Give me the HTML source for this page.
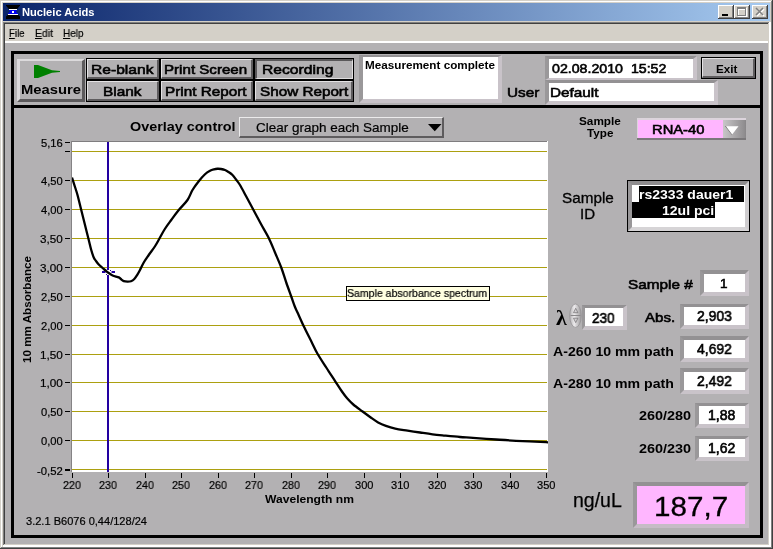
<!DOCTYPE html>
<html lang="en"><head><meta charset="utf-8"><title>Nucleic Acids</title>
<style>
html,body{margin:0;padding:0;background:#d4d0c8;}
#w{position:relative;width:773px;height:549px;overflow:hidden;font-family:"Liberation Sans", sans-serif;}
#w div,#w svg,#w span{position:absolute;box-sizing:content-box;}
#w span{will-change:transform;white-space:pre;line-height:1;transform-origin:0 0;}
#w span u{text-decoration:underline;text-underline-offset:1px;}
</style></head>
<body><div id="w">
<div style="left:0px;top:0px;width:773px;height:549px;background:#d4d0c8;"></div>
<div style="left:1px;top:1px;width:771px;height:547px;background:#fff;"></div>
<div style="left:2px;top:2px;width:770px;height:546px;background:#d4d0c8;"></div>
<div style="left:771px;top:1px;width:1px;height:547px;background:#808080;"></div>
<div style="left:1px;top:547px;width:771px;height:1px;background:#808080;"></div>
<div style="left:772px;top:0px;width:1px;height:549px;background:#404040;"></div>
<div style="left:0px;top:548px;width:773px;height:1px;background:#404040;"></div>
<div style="left:3px;top:3px;width:767px;height:18px;background:linear-gradient(to right,#0a246a,#a6caf0);"></div>
<div style="left:3px;top:22px;width:767px;height:525px;background:#808080;"></div>
<div style="left:4px;top:23px;width:766px;height:524px;background:#404040;"></div>
<div style="left:769px;top:22px;width:2px;height:525px;background:#fff;"></div>
<div style="left:3px;top:545px;width:768px;height:2px;background:#fff;"></div>
<div style="left:768px;top:23px;width:1px;height:522px;background:#d4d0c8;"></div>
<div style="left:4px;top:544px;width:765px;height:1px;background:#d4d0c8;"></div>
<div style="left:5px;top:24px;width:763px;height:17px;background:#d4d0c8;"></div>
<div style="left:5px;top:41px;width:763px;height:2px;background:#fff;"></div>
<div style="left:5px;top:43px;width:763px;height:501px;background:#b3b1b3;"></div>
<svg style="left:6px;top:5px" width="14" height="14" viewBox="0 0 14 14">
<polygon points="0,0 14,0 14,0.6 11.2,4 2.8,4 0,0.6" fill="#000"/>
<rect x="3" y="4" width="8" height="1" fill="#fff"/>
<polygon points="3,5 11,5 10,6.8 12.2,9 1.8,9 4,6.8" fill="#0000f0"/>
<rect x="6" y="6" width="2" height="2" fill="#fff"/>
<rect x="2" y="9" width="10" height="1" fill="#fff"/>
<polygon points="1.6,10 12.4,10 14,11.6 14,14 0,14 0,11.6" fill="#000"/>
</svg>
<div style="left:718px;top:5px;width:16px;height:14px;background:#404040;"></div>
<div style="left:718px;top:5px;width:15px;height:13px;background:#fff;"></div>
<div style="left:719px;top:6px;width:14px;height:12px;background:#808080;"></div>
<div style="left:719px;top:6px;width:13px;height:11px;background:#d4d0c8;"></div>
<div style="left:734px;top:5px;width:16px;height:14px;background:#404040;"></div>
<div style="left:734px;top:5px;width:15px;height:13px;background:#fff;"></div>
<div style="left:735px;top:6px;width:14px;height:12px;background:#808080;"></div>
<div style="left:735px;top:6px;width:13px;height:11px;background:#d4d0c8;"></div>
<div style="left:752px;top:5px;width:16px;height:14px;background:#404040;"></div>
<div style="left:752px;top:5px;width:15px;height:13px;background:#fff;"></div>
<div style="left:753px;top:6px;width:14px;height:12px;background:#808080;"></div>
<div style="left:753px;top:6px;width:13px;height:11px;background:#d4d0c8;"></div>
<div style="left:722px;top:14px;width:6px;height:2px;background:#000;"></div>
<div style="left:738px;top:8px;width:7px;height:6px;border:1px solid #fff;border-top-width:2px"></div>
<div style="left:737px;top:7px;width:7px;height:6px;border:1px solid #808080;border-top-width:2px"></div>
<svg style="left:755px;top:7px" width="11" height="10" viewBox="0 0 11 10">
<path d="M2,2 L9,9 M9,2 L2,9" stroke="#fff" stroke-width="1.6" fill="none"/>
<path d="M1,1 L8,8 M8,1 L1,8" stroke="#808080" stroke-width="1.6" fill="none"/></svg>
<div style="left:11px;top:51px;width:752px;height:487px;background:#000;"></div>
<div style="left:14px;top:54px;width:746px;height:51px;background:#b3b1b3;"></div>
<div style="left:14px;top:108px;width:746px;height:427px;background:#b3b1b3;"></div>
<div style="left:17px;top:59px;width:62px;height:38px;background:#b3b1b3;border-style:solid;border-width:2px 3px 3px 3px;border-color:#dcdadc #5c5a5c #5c5a5c #dcdadc;"></div>
<svg style="left:34px;top:65px" width="27" height="14" viewBox="0 0 27 14"><polygon points="0,0 4,0 12,3 18,5.3 26,6 26,7 18,7.7 12,10 4,13 0,13" fill="#008000"/></svg>
<div style="left:86px;top:58px;width:268px;height:44px;background:#000;"></div>
<div style="left:87px;top:59px;width:69px;height:17px;background:#b3b1b3;border-style:solid;border-width:1px 2px 2px 1px;border-color:#e4e2e4 #5e5c5e #5e5c5e #e4e2e4;"></div>
<div style="left:87px;top:81px;width:69px;height:17px;background:#b3b1b3;border-style:solid;border-width:1px 2px 2px 1px;border-color:#e4e2e4 #5e5c5e #5e5c5e #e4e2e4;"></div>
<div style="left:161px;top:59px;width:89px;height:17px;background:#b3b1b3;border-style:solid;border-width:1px 2px 2px 1px;border-color:#e4e2e4 #5e5c5e #5e5c5e #e4e2e4;"></div>
<div style="left:161px;top:81px;width:89px;height:17px;background:#b3b1b3;border-style:solid;border-width:1px 2px 2px 1px;border-color:#e4e2e4 #5e5c5e #5e5c5e #e4e2e4;"></div>
<div style="left:255px;top:59px;width:95px;height:17px;background:#b3b1b3;border-style:solid;border-width:2px 1px 1px 2px;border-color:#5a585a #e0dee0 #e0dee0 #5a585a;"></div>
<div style="left:255px;top:81px;width:95px;height:17px;background:#b3b1b3;border-style:solid;border-width:1px 2px 2px 1px;border-color:#e4e2e4 #5e5c5e #5e5c5e #e4e2e4;"></div>
<div style="left:359px;top:55px;width:135px;height:42px;background:#fff;border-style:solid;border-width:2px 4px 4px 4px;border-color:#939193 #c9c3c9 #c9c3c9 #9a989a"></div>
<div style="left:545px;top:56px;width:144px;height:19px;background:#fff;border-style:solid;border-width:3px 4px 2px 4px;border-color:#939193 #c9c3c9 #c9c3c9 #9a989a"></div>
<div style="left:545px;top:80px;width:165px;height:18px;background:#fff;border-style:solid;border-width:3px 4px 4px 4px;border-color:#939193 #c9c3c9 #c9c3c9 #9a989a"></div>
<div style="left:701px;top:57px;width:55px;height:22px;background:#000;"></div>
<div style="left:702px;top:58px;width:50px;height:17px;background:#b3b1b3;border-style:solid;border-width:1px 2px 2px 1px;border-color:#e4e2e4 #5e5c5e #5e5c5e #e4e2e4;"></div>
<div style="left:239px;top:117px;width:202px;height:18px;background:#b3b1b3;border-style:solid;border-width:1px 2px 2px 1px;border-color:#ecebec #5e5c5e #5e5c5e #ecebec;"></div>
<svg style="left:428px;top:124px" width="14" height="8" viewBox="0 0 14 8"><polygon points="0,0 13.5,0 6.75,7.2" fill="#000"/></svg>
<div style="left:71px;top:141px;width:476px;height:1px;background:#7f7d7f;"></div>
<div style="left:547px;top:141px;width:1px;height:1px;background:#fff;"></div>
<div style="left:71px;top:141px;width:1px;height:331px;background:#858385;"></div>
<svg style="left:72px;top:142px" width="476" height="330" viewBox="72 142 476 330"><rect x="72" y="142" width="476" height="330" fill="#fff"/><rect x="72" y="151" width="475" height="1" fill="#aca010"/><rect x="72" y="180" width="475" height="1" fill="#aca010"/><rect x="72" y="209" width="475" height="1" fill="#aca010"/><rect x="72" y="238" width="475" height="1" fill="#aca010"/><rect x="72" y="267" width="475" height="1" fill="#aca010"/><rect x="72" y="296" width="475" height="1" fill="#aca010"/><rect x="72" y="325" width="475" height="1" fill="#aca010"/><rect x="72" y="354" width="475" height="1" fill="#aca010"/><rect x="72" y="382" width="475" height="1" fill="#aca010"/><rect x="72" y="411" width="475" height="1" fill="#aca010"/><rect x="72" y="440" width="475" height="1" fill="#aca010"/><rect x="72" y="469" width="475" height="1" fill="#aca010"/><rect x="107" y="142" width="2" height="128" fill="#2200a0"/><rect x="107" y="275" width="2" height="197" fill="#2200a0"/><rect x="102" y="271" width="3.5" height="2" fill="#2200a0"/><rect x="111.5" y="271" width="3.5" height="2" fill="#2200a0"/><rect x="110" y="270" width="1" height="1" fill="#2200a0"/><rect x="106" y="274" width="1" height="1" fill="#2200a0"/><path d="M72.00,177.50 C72.50,179.08 74.08,184.08 75.00,187.00 C75.92,189.92 76.46,191.17 77.50,195.00 C78.54,198.83 80.00,205.00 81.25,210.00 C82.50,215.00 83.75,220.00 85.00,225.00 C86.25,230.00 87.71,235.83 88.75,240.00 C89.79,244.17 90.42,247.08 91.25,250.00 C92.08,252.92 92.96,255.67 93.75,257.50 C94.54,259.33 95.17,259.83 96.00,261.00 C96.83,262.17 97.75,263.42 98.75,264.50 C99.75,265.58 100.96,266.58 102.00,267.50 C103.04,268.42 104.00,269.17 105.00,270.00 C106.00,270.83 106.73,271.58 108.00,272.50 C109.27,273.42 110.80,274.68 112.60,275.50 C114.40,276.32 117.32,276.72 118.80,277.40 C120.28,278.08 120.67,278.97 121.50,279.60 C122.33,280.23 122.80,280.87 123.80,281.20 C124.80,281.53 126.30,281.60 127.50,281.60 C128.70,281.60 129.87,281.63 131.00,281.20 C132.13,280.77 133.23,280.10 134.30,279.00 C135.37,277.90 136.45,276.10 137.40,274.60 C138.35,273.10 138.94,272.02 140.00,270.00 C141.06,267.98 142.29,265.00 143.75,262.50 C145.21,260.00 146.88,257.71 148.75,255.00 C150.62,252.29 153.12,249.17 155.00,246.25 C156.88,243.33 158.33,240.42 160.00,237.50 C161.67,234.58 163.12,231.67 165.00,228.75 C166.88,225.83 168.96,223.12 171.25,220.00 C173.54,216.88 176.04,213.33 178.75,210.00 C181.46,206.67 185.21,203.33 187.50,200.00 C189.79,196.67 190.62,193.12 192.50,190.00 C194.38,186.88 196.67,183.88 198.75,181.25 C200.83,178.62 203.12,176.00 205.00,174.25 C206.88,172.50 208.50,171.57 210.00,170.75 C211.50,169.93 212.75,169.63 214.00,169.30 C215.25,168.97 216.33,168.80 217.50,168.75 C218.67,168.70 219.75,168.79 221.00,169.00 C222.25,169.21 223.75,169.50 225.00,170.00 C226.25,170.50 227.25,171.17 228.50,172.00 C229.75,172.83 231.25,173.75 232.50,175.00 C233.75,176.25 234.75,177.83 236.00,179.50 C237.25,181.17 238.29,182.17 240.00,185.00 C241.71,187.83 243.96,192.25 246.25,196.50 C248.54,200.75 251.25,205.83 253.75,210.50 C256.25,215.17 258.75,219.92 261.25,224.50 C263.75,229.08 266.46,233.33 268.75,238.00 C271.04,242.67 272.92,247.58 275.00,252.50 C277.08,257.42 279.38,262.50 281.25,267.50 C283.12,272.50 284.58,277.67 286.25,282.50 C287.92,287.33 289.79,292.42 291.25,296.50 C292.71,300.58 293.96,304.33 295.00,307.00 C296.04,309.67 296.04,309.29 297.50,312.50 C298.96,315.71 301.46,321.46 303.75,326.25 C306.04,331.04 308.96,336.67 311.25,341.25 C313.54,345.83 315.00,349.38 317.50,353.75 C320.00,358.12 324.17,364.24 326.25,367.50 C328.33,370.76 328.34,370.75 330.00,373.30 C331.66,375.85 334.27,379.85 336.20,382.80 C338.13,385.75 339.78,388.42 341.60,391.00 C343.42,393.58 345.15,396.05 347.10,398.30 C349.05,400.55 350.72,402.30 353.30,404.50 C355.88,406.70 359.75,409.38 362.60,411.50 C365.45,413.62 367.82,415.38 370.40,417.20 C372.98,419.02 375.52,420.95 378.10,422.40 C380.68,423.85 383.05,424.87 385.90,425.90 C388.75,426.93 391.58,427.82 395.20,428.60 C398.82,429.38 403.45,429.95 407.60,430.60 C411.75,431.25 415.95,431.88 420.10,432.50 C424.25,433.12 428.37,433.78 432.50,434.30 C436.63,434.82 440.32,435.15 444.90,435.60 C449.48,436.05 455.32,436.63 460.00,437.00 C464.68,437.37 467.00,437.38 473.00,437.80 C479.00,438.22 488.83,439.00 496.00,439.50 C503.17,440.00 507.67,440.35 516.00,440.80 C524.33,441.25 540.67,441.95 546.00,442.20 C551.33,442.45 547.67,442.28 548.00,442.30" fill="none" stroke="#000" stroke-width="2.3" stroke-linejoin="round"/></svg>
<div style="left:65px;top:142px;width:5px;height:1px;background:#000;"></div>
<div style="left:65px;top:151px;width:5px;height:1px;background:#000;"></div>
<div style="left:65px;top:180px;width:5px;height:1px;background:#000;"></div>
<div style="left:65px;top:209px;width:5px;height:1px;background:#000;"></div>
<div style="left:65px;top:238px;width:5px;height:1px;background:#000;"></div>
<div style="left:65px;top:267px;width:5px;height:1px;background:#000;"></div>
<div style="left:65px;top:296px;width:5px;height:1px;background:#000;"></div>
<div style="left:65px;top:325px;width:5px;height:1px;background:#000;"></div>
<div style="left:65px;top:354px;width:5px;height:1px;background:#000;"></div>
<div style="left:65px;top:382px;width:5px;height:1px;background:#000;"></div>
<div style="left:65px;top:411px;width:5px;height:1px;background:#000;"></div>
<div style="left:65px;top:440px;width:5px;height:1px;background:#000;"></div>
<div style="left:65px;top:469px;width:5px;height:2px;background:#000;"></div>
<div style="left:72px;top:473px;width:1px;height:5px;background:#000;"></div>
<div style="left:108px;top:473px;width:1px;height:5px;background:#000;"></div>
<div style="left:145px;top:473px;width:1px;height:5px;background:#000;"></div>
<div style="left:181px;top:473px;width:1px;height:5px;background:#000;"></div>
<div style="left:218px;top:473px;width:1px;height:5px;background:#000;"></div>
<div style="left:254px;top:473px;width:1px;height:5px;background:#000;"></div>
<div style="left:291px;top:473px;width:1px;height:5px;background:#000;"></div>
<div style="left:327px;top:473px;width:1px;height:5px;background:#000;"></div>
<div style="left:364px;top:473px;width:1px;height:5px;background:#000;"></div>
<div style="left:400px;top:473px;width:1px;height:5px;background:#000;"></div>
<div style="left:437px;top:473px;width:1px;height:5px;background:#000;"></div>
<div style="left:473px;top:473px;width:1px;height:5px;background:#000;"></div>
<div style="left:510px;top:473px;width:1px;height:5px;background:#000;"></div>
<div style="left:546px;top:473px;width:1px;height:5px;background:#000;"></div>
<div style="left:346px;top:286px;width:144px;height:15px;background:#000;"></div>
<div style="left:347px;top:287px;width:142px;height:13px;background:#ffffe1;"></div>
<div style="left:637px;top:118px;width:109px;height:22px;background:linear-gradient(to right,#c4c2c4,#8a888a)"></div>
<div style="left:637px;top:118px;width:109px;height:2px;background:#dcd4dc;"></div>
<div style="left:637px;top:118px;width:1px;height:21px;background:#dcd4dc;"></div>
<div style="left:637px;top:138px;width:109px;height:2px;background:#7a787a;"></div>
<div style="left:638px;top:120px;width:85px;height:18px;background:#ffb6ff;"></div>
<div style="left:723px;top:120px;width:22px;height:18px;background:linear-gradient(to right,#c8c6c8,#8e8c8e)"></div>
<svg style="left:725px;top:126px" width="14" height="9" viewBox="0 0 14 9"><polygon points="0,0 1,0 7.5,8.5 6.5,8.5" fill="#6a686a"/><polygon points="1,0.3 13.5,0.3 7.2,8.5" fill="#fff"/></svg>
<div style="left:627px;top:180px;width:123px;height:52px;background:#000;"></div>
<div style="left:628px;top:181px;width:113px;height:42px;background:#fff;border-style:solid;border-width:4px 4px 4px 4px;border-color:#8e8c8e #cfcdcf #d6d4d6 #999799"></div>
<div style="left:639px;top:186px;width:105px;height:16px;background:#000;"></div>
<div style="left:632px;top:202px;width:83px;height:16px;background:#000;"></div>
<div style="left:700px;top:270px;width:41px;height:18px;background:#fff;border-style:solid;border-width:4px 4px 4px 4px;border-color:#939193 #c9c3c9 #c9c3c9 #9a989a"></div>
<svg style="left:569px;top:303px" width="14" height="26" viewBox="0 0 14 26">
<defs><linearGradient id="sg" x1="0" x2="1" y1="0" y2="0"><stop offset="0" stop-color="#b4b2b4"/><stop offset="0.4" stop-color="#eceaec"/><stop offset="1" stop-color="#9a989a"/></linearGradient></defs>
<ellipse cx="6.5" cy="12.7" rx="5.8" ry="11.7" fill="url(#sg)" stroke="#908e90" stroke-width="0.7"/>
<path d="M1.5,12.5 H11.5" stroke="#8a888a" stroke-width="1"/>
<path d="M6.7,5.3 L8.9,9.7 H4.5 Z" fill="#d2d0d2" stroke="#6e6c6e" stroke-width="0.7"/>
<path d="M6.7,19.6 L8.9,15.2 H4.5 Z" fill="#d2d0d2" stroke="#6e6c6e" stroke-width="0.7"/>
</svg>
<div style="left:582px;top:305px;width:38px;height:18px;background:#fff;border-style:solid;border-width:3px 4px 4px 3px;border-color:#939193 #c9c3c9 #c9c3c9 #9a989a"></div>
<div style="left:680px;top:304px;width:61px;height:18px;background:#fff;border-style:solid;border-width:3px 4px 4px 4px;border-color:#939193 #c9c3c9 #c9c3c9 #9a989a"></div>
<div style="left:680px;top:336px;width:61px;height:18px;background:#fff;border-style:solid;border-width:4px 4px 4px 4px;border-color:#939193 #c9c3c9 #c9c3c9 #9a989a"></div>
<div style="left:680px;top:368px;width:61px;height:18px;background:#fff;border-style:solid;border-width:4px 4px 4px 4px;border-color:#939193 #c9c3c9 #c9c3c9 #9a989a"></div>
<div style="left:695px;top:403px;width:46px;height:18px;background:#fff;border-style:solid;border-width:3px 4px 4px 4px;border-color:#939193 #c9c3c9 #c9c3c9 #9a989a"></div>
<div style="left:695px;top:436px;width:46px;height:18px;background:#fff;border-style:solid;border-width:3px 4px 4px 4px;border-color:#939193 #c9c3c9 #c9c3c9 #9a989a"></div>
<div style="left:633px;top:482px;width:108px;height:38px;background:#ffb6ff;border-style:solid;border-width:4px 4px 4px 4px;border-color:#939193 #c6bcc6 #c6bcc6 #9a989a"></div>
<span style="left:21.90px;top:6.69px;font-size:11px;font-weight:700;color:#fff;transform:scaleX(1.0114);">Nucleic Acids</span>
<span style="left:9.03px;top:27.79px;font-size:11px;-webkit-text-stroke:0.2px #000;transform:scaleX(0.8799);"><u>F</u>ile</span>
<span style="left:34.90px;top:27.79px;font-size:11px;-webkit-text-stroke:0.2px #000;transform:scaleX(0.9533);"><u>E</u>dit</span>
<span style="left:62.99px;top:27.79px;font-size:11px;-webkit-text-stroke:0.2px #000;transform:scaleX(0.9077);"><u>H</u>elp</span>
<span style="left:20.85px;top:82.57px;font-size:13.5px;font-weight:700;transform:scaleX(1.0948);">Measure</span>
<span style="left:91.24px;top:62.58px;font-size:13.5px;-webkit-text-stroke:0.6px #000;transform:scaleX(1.1560);">Re-blank</span>
<span style="left:103.29px;top:84.58px;font-size:13.5px;-webkit-text-stroke:0.6px #000;transform:scaleX(1.1415);">Blank</span>
<span style="left:164.34px;top:62.58px;font-size:13.5px;-webkit-text-stroke:0.6px #000;transform:scaleX(1.1195);">Print Screen</span>
<span style="left:165.30px;top:84.58px;font-size:13.5px;-webkit-text-stroke:0.6px #000;transform:scaleX(1.1312);">Print Report</span>
<span style="left:262.22px;top:62.58px;font-size:13.5px;-webkit-text-stroke:0.6px #000;transform:scaleX(1.1598);">Recording</span>
<span style="left:260.32px;top:84.58px;font-size:13.5px;-webkit-text-stroke:0.6px #000;transform:scaleX(1.1300);">Show Report</span>
<span style="left:364.78px;top:60.49px;font-size:11px;font-weight:700;transform:scaleX(1.0634);">Measurement complete</span>
<span style="left:506.51px;top:85.58px;font-size:13.5px;-webkit-text-stroke:0.6px #000;transform:scaleX(1.1346);">User</span>
<span style="left:552.20px;top:62.18px;font-size:13.5px;-webkit-text-stroke:0.6px #000;transform:scaleX(1.0509);">02.08.2010  15:52</span>
<span style="left:550.48px;top:85.98px;font-size:13.5px;-webkit-text-stroke:0.6px #000;transform:scaleX(1.1335);">Default</span>
<span style="left:715.58px;top:63.69px;font-size:11px;font-weight:700;transform:scaleX(1.0627);">Exit</span>
<span style="left:130.32px;top:119.57px;font-size:13.5px;font-weight:700;transform:scaleX(1.0660);">Overlay control</span>
<span style="left:256.13px;top:121.10px;font-size:13px;-webkit-text-stroke:0.2px #000;transform:scaleX(1.0364);">Clear graph each Sample</span>
<span style="left:40.61px;top:137.79px;font-size:11px;-webkit-text-stroke:0.2px #000;transform:scaleX(1.0178);">5,16</span>
<span style="left:40.61px;top:175.79px;font-size:11px;-webkit-text-stroke:0.2px #000;transform:scaleX(1.0154);">4,50</span>
<span style="left:40.61px;top:204.79px;font-size:11px;-webkit-text-stroke:0.2px #000;transform:scaleX(1.0154);">4,00</span>
<span style="left:40.24px;top:233.79px;font-size:11px;-webkit-text-stroke:0.2px #000;transform:scaleX(1.0589);">3,50</span>
<span style="left:40.24px;top:262.79px;font-size:11px;-webkit-text-stroke:0.2px #000;transform:scaleX(1.0589);">3,00</span>
<span style="left:40.61px;top:291.79px;font-size:11px;-webkit-text-stroke:0.2px #000;transform:scaleX(1.0154);">2,50</span>
<span style="left:40.61px;top:320.79px;font-size:11px;-webkit-text-stroke:0.2px #000;transform:scaleX(1.0154);">2,00</span>
<span style="left:39.55px;top:349.79px;font-size:11px;-webkit-text-stroke:0.2px #000;transform:scaleX(1.0669);">1,50</span>
<span style="left:39.55px;top:377.79px;font-size:11px;-webkit-text-stroke:0.2px #000;transform:scaleX(1.0669);">1,00</span>
<span style="left:40.61px;top:406.79px;font-size:11px;-webkit-text-stroke:0.2px #000;transform:scaleX(1.0154);">0,50</span>
<span style="left:40.61px;top:435.79px;font-size:11px;-webkit-text-stroke:0.2px #000;transform:scaleX(1.0154);">0,00</span>
<span style="left:37.00px;top:465.79px;font-size:11px;-webkit-text-stroke:0.2px #000;transform:scaleX(1.0277);">-0,52</span>
<span style="left:63.38px;top:480.39px;font-size:11px;-webkit-text-stroke:0.2px #000;transform:scaleX(0.9780);">220</span>
<span style="left:99.38px;top:480.39px;font-size:11px;-webkit-text-stroke:0.2px #000;transform:scaleX(0.9780);">230</span>
<span style="left:136.38px;top:480.39px;font-size:11px;-webkit-text-stroke:0.2px #000;transform:scaleX(0.9780);">240</span>
<span style="left:172.38px;top:480.39px;font-size:11px;-webkit-text-stroke:0.2px #000;transform:scaleX(0.9780);">250</span>
<span style="left:209.38px;top:480.39px;font-size:11px;-webkit-text-stroke:0.2px #000;transform:scaleX(0.9780);">260</span>
<span style="left:245.38px;top:480.39px;font-size:11px;-webkit-text-stroke:0.2px #000;transform:scaleX(0.9780);">270</span>
<span style="left:282.38px;top:480.39px;font-size:11px;-webkit-text-stroke:0.2px #000;transform:scaleX(0.9780);">280</span>
<span style="left:318.38px;top:480.39px;font-size:11px;-webkit-text-stroke:0.2px #000;transform:scaleX(0.9780);">290</span>
<span style="left:355.06px;top:480.39px;font-size:11px;-webkit-text-stroke:0.2px #000;transform:scaleX(1.0057);">300</span>
<span style="left:391.06px;top:480.39px;font-size:11px;-webkit-text-stroke:0.2px #000;transform:scaleX(1.0057);">310</span>
<span style="left:428.06px;top:480.39px;font-size:11px;-webkit-text-stroke:0.2px #000;transform:scaleX(1.0057);">320</span>
<span style="left:464.06px;top:480.39px;font-size:11px;-webkit-text-stroke:0.2px #000;transform:scaleX(1.0057);">330</span>
<span style="left:501.06px;top:480.39px;font-size:11px;-webkit-text-stroke:0.2px #000;transform:scaleX(1.0057);">340</span>
<span style="left:537.06px;top:480.39px;font-size:11px;-webkit-text-stroke:0.2px #000;transform:scaleX(1.0057);">350</span>
<span style="left:264.80px;top:495.20px;font-size:10.4px;font-weight:700;transform:scaleX(1.1639);">Wavelength nm</span>
<span style="left:25.70px;top:515.79px;font-size:11px;-webkit-text-stroke:0.2px #000;transform:scaleX(1.0041);">3.2.1 B6076 0,44/128/24</span>
<span style="left:21.5px;top:362.5px;font-size:11px;font-weight:700;transform:rotate(-90deg) scaleX(1.0586);">10 mm Absorbance</span>
<span style="left:347.21px;top:288.19px;font-size:11px;-webkit-text-stroke:0.2px #000;transform:scaleX(0.9588);">Sample absorbance spectrum</span>
<span style="left:578.63px;top:115.69px;font-size:11px;font-weight:700;transform:scaleX(1.0701);">Sample</span>
<span style="left:587.00px;top:127.69px;font-size:11px;font-weight:700;transform:scaleX(1.0633);">Type</span>
<span style="left:652.40px;top:123.38px;font-size:13.5px;-webkit-text-stroke:0.6px #000;transform:scaleX(1.0911);">RNA-40</span>
<span style="left:562.01px;top:191.02px;font-size:14px;-webkit-text-stroke:0.3px #000;transform:scaleX(1.0909);">Sample</span>
<span style="left:579.92px;top:207.03px;font-size:14px;-webkit-text-stroke:0.3px #000;transform:scaleX(1.0769);">ID</span>
<span style="left:639.19px;top:187.57px;font-size:13.5px;font-weight:700;color:#fff;transform:scaleX(1.0393);">rs2333 dauer1</span>
<span style="left:661.83px;top:203.57px;font-size:13.5px;font-weight:700;color:#fff;transform:scaleX(1.0382);">12ul pci</span>
<span style="left:628.33px;top:278.18px;font-size:13.5px;-webkit-text-stroke:0.6px #000;transform:scaleX(1.1337);">Sample #</span>
<span style="left:719.66px;top:276.58px;font-size:13.5px;-webkit-text-stroke:0.6px #000;">1</span>
<span style="left:555.60px;top:308.38px;font-size:20px;font-weight:700;font-family:'Liberation Serif', serif;transform:scaleX(1.0945);">λ</span>
<span style="left:592.00px;top:311.15px;font-size:14px;-webkit-text-stroke:0.6px #000;transform:scaleX(0.9689);">230</span>
<span style="left:644.85px;top:310.78px;font-size:13.5px;-webkit-text-stroke:0.6px #000;transform:scaleX(1.1137);">Abs.</span>
<span style="left:696.80px;top:309.35px;font-size:14px;-webkit-text-stroke:0.6px #000;transform:scaleX(0.9931);">2,903</span>
<span style="left:552.77px;top:344.97px;font-size:13.5px;font-weight:700;transform:scaleX(1.0467);">A-260 10 mm path</span>
<span style="left:696.80px;top:342.35px;font-size:14px;-webkit-text-stroke:0.6px #000;transform:scaleX(0.9927);">4,692</span>
<span style="left:552.77px;top:377.37px;font-size:13.5px;font-weight:700;transform:scaleX(1.0467);">A-280 10 mm path</span>
<span style="left:696.80px;top:374.35px;font-size:14px;-webkit-text-stroke:0.6px #000;transform:scaleX(0.9927);">2,492</span>
<span style="left:639.35px;top:408.57px;font-size:13.5px;font-weight:700;transform:scaleX(1.0685);">260/280</span>
<span style="left:707.59px;top:408.15px;font-size:14px;-webkit-text-stroke:0.6px #000;transform:scaleX(1.0055);">1,88</span>
<span style="left:639.35px;top:442.17px;font-size:13.5px;font-weight:700;transform:scaleX(1.0685);">260/230</span>
<span style="left:707.62px;top:440.75px;font-size:14px;-webkit-text-stroke:0.6px #000;transform:scaleX(0.9908);">1,62</span>
<span style="left:572.97px;top:491.32px;font-size:19.5px;-webkit-text-stroke:0.25px #000;">ng/uL</span>
<span style="left:653.91px;top:493.15px;font-size:28px;-webkit-text-stroke:0.3px #000;transform:scaleX(1.0579);">187,7</span>
</div></body></html>
